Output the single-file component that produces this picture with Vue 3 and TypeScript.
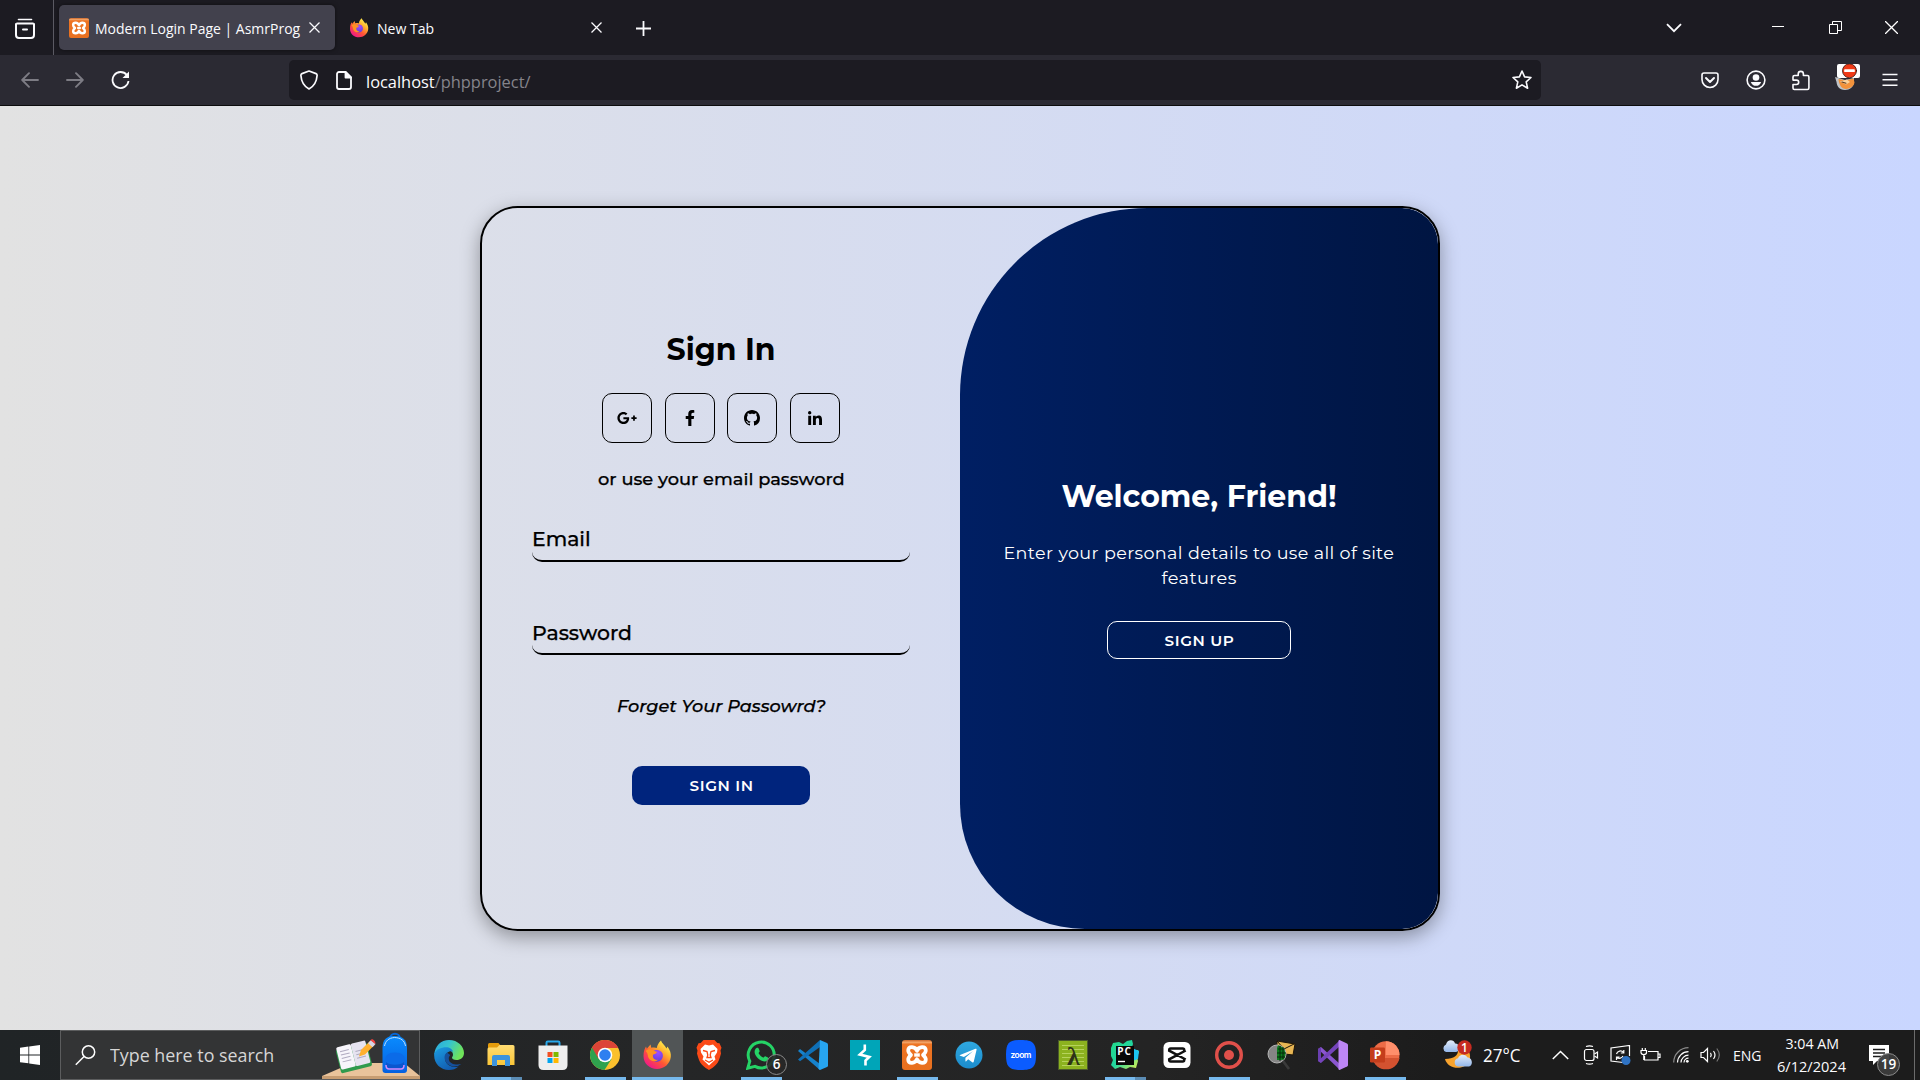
<script setup lang="ts">
import type { Directive } from 'vue'

// Stretches a label horizontally so that it fills the given width in pixels.
const vFit: Directive<HTMLElement, number> = {
  mounted(el, { value }) {
    el.style.transform = `scaleX(${value / el.offsetWidth})`
  },
}

interface TaskApp {
  name: string
  state?: 'open' | 'stacked' | 'active'
}

const apps: TaskApp[] = [
  { name: 'edge' },
  { name: 'explorer', state: 'stacked' },
  { name: 'store' },
  { name: 'chrome', state: 'open' },
  { name: 'firefox', state: 'active' },
  { name: 'brave' },
  { name: 'whatsapp', state: 'open' },
  { name: 'vscode' },
  { name: 'burp' },
  { name: 'xampp', state: 'open' },
  { name: 'telegram' },
  { name: 'zoom' },
  { name: 'lambda' },
  { name: 'pycharm', state: 'stacked' },
  { name: 'capcut' },
  { name: 'record', state: 'open' },
  { name: 'mailsearch' },
  { name: 'visualstudio' },
  { name: 'powerpoint', state: 'open' },
]

const socials = [
  { name: 'google', box: '0 0 640 512', width: 20, d: 'M386.061 228.496c1.834 9.692 3.143 19.384 3.143 31.956C389.204 370.205 315.599 448 204.8 448c-106.084 0-192-85.915-192-192s85.916-192 192-192c51.864 0 95.083 18.859 128.611 50.292l-52.126 50.03c-14.145-13.621-39.028-29.599-76.485-29.599-65.484 0-118.92 54.221-118.92 121.277 0 67.056 53.436 121.277 118.92 121.277 75.961 0 104.513-54.745 108.965-82.773H204.8v-66.009h181.261zm185.406 6.437V179.2h-56.001v55.733h-55.733v56.001h55.733v55.733h56.001v-55.733H627.2v-56.001h-55.733z' },
  { name: 'facebook', box: '0 0 320 512', width: 10, d: 'M279.14 288l14.22-92.66h-88.91v-60.13c0-25.35 12.42-50.06 52.24-50.06h40.42V6.26S260.43 0 225.36 0c-73.22 0-121.08 44.38-121.08 124.72v70.62H22.89V288h81.39v224h100.17V288z' },
  { name: 'github', box: '0 0 16 16', width: 16, d: 'M8 0C3.58 0 0 3.58 0 8c0 3.54 2.29 6.53 5.47 7.59.4.07.55-.17.55-.38 0-.19-.01-.82-.01-1.49-2.01.37-2.53-.49-2.69-.94-.09-.23-.48-.94-.82-1.13-.28-.15-.68-.52-.01-.53.63-.01 1.08.58 1.23.82.72 1.21 1.87.87 2.33.66.07-.52.28-.87.51-1.07-1.78-.2-3.64-.89-3.64-3.95 0-.87.31-1.59.82-2.15-.08-.2-.36-1.02.08-2.12 0 0 .67-.21 2.2.82.64-.18 1.32-.27 2-.27s1.36.09 2 .27c1.53-1.04 2.2-.82 2.2-.82.44 1.1.16 1.92.08 2.12.51.56.82 1.27.82 2.15 0 3.07-1.87 3.75-3.65 3.95.29.25.54.73.54 1.48 0 1.07-.01 1.93-.01 2.2 0 .21.15.46.55.38A8.01 8.01 0 0 0 16 8c0-4.42-3.58-8-8-8z' },
  { name: 'linkedin', box: '0 -32 448 512', width: 14, d: 'M100.28 448H7.4V148.9h92.88zM53.79 108.1C24.09 108.1 0 83.5 0 53.8a53.79 53.79 0 0 1 107.58 0c0 29.7-24.1 54.3-53.79 54.3zM447.9 448h-92.68V302.4c0-34.7-.7-79.2-48.29-79.2-48.29 0-55.69 37.7-55.69 76.7V448h-92.78V148.9h89.08v40.8h1.3c12.4-23.5 42.69-48.3 87.88-48.3 94 0 111.28 61.9 111.28 142.3V448z' },
]
</script>

<template>
  <div class="desktop">
    <!-- Shared gradients and logos -->
    <svg class="defs" width="0" height="0">
      <defs>
        <linearGradient id="ff-body" x1="0.85" y1="0.1" x2="0.2" y2="0.95">
          <stop offset="0" stop-color="#fff44f" /><stop offset=".3" stop-color="#ffb02e" />
          <stop offset=".6" stop-color="#ff5634" /><stop offset="1" stop-color="#f0168c" />
        </linearGradient>
        <radialGradient id="ff-globe" cx=".6" cy=".25" r=".8">
          <stop offset="0" stop-color="#a24bff" /><stop offset="1" stop-color="#5b3fd8" />
        </radialGradient>
        <linearGradient id="xa" x1="0" y1="0" x2="0" y2="1">
          <stop offset="0" stop-color="#c9662a" /><stop offset=".08" stop-color="#f3a467" /><stop offset=".14" stop-color="#ee7423" /><stop offset="1" stop-color="#e8701f" />
        </linearGradient>
        <linearGradient id="edge-top" x1="0" y1="0" x2="1" y2=".4">
          <stop offset="0" stop-color="#2aa6e0" /><stop offset=".5" stop-color="#35c4cf" /><stop offset="1" stop-color="#6fe35a" />
        </linearGradient>
        <linearGradient id="edge-low" x1="0" y1="0" x2=".6" y2="1">
          <stop offset="0" stop-color="#1b9de2" /><stop offset="1" stop-color="#125cb0" />
        </linearGradient>
        <linearGradient id="folder" x1="0" y1="0" x2="0" y2="1">
          <stop offset="0" stop-color="#ffdc72" /><stop offset="1" stop-color="#fbc638" />
        </linearGradient>
        <linearGradient id="tg" x1="0" y1="0" x2="0" y2="1">
          <stop offset="0" stop-color="#2fa8e0" /><stop offset="1" stop-color="#1b8ccc" />
        </linearGradient>
        <linearGradient id="pc" x1="0" y1="0" x2="1" y2="1">
          <stop offset="0" stop-color="#21d789" /><stop offset=".5" stop-color="#22d6a0" /><stop offset="1" stop-color="#e6f24d" />
        </linearGradient>
        <linearGradient id="bag" x1="0" y1="0" x2="0" y2="1">
          <stop offset="0" stop-color="#0a8cff" /><stop offset="1" stop-color="#0560e0" />
        </linearGradient>
        <linearGradient id="cloud" x1="0" y1="0" x2="0" y2="1">
          <stop offset="0" stop-color="#e4edfb" /><stop offset="1" stop-color="#93b7ea" />
        </linearGradient>
        <symbol id="firefox" viewBox="0 0 30 30">
          <path d="M19 0.500c.6 2.500 4 5 5.500 8l1-2C28 10 29.300 13.500 28.800 17 28 24 22 29 15 29 7.500 29 1.500 23.500 1.500 16c0-4.500 1.200-7.500 2.500-9.500l.8 2.300L8.500 4.600l.8 3.200c2-.5 4.200-.5 5.500.3C15 5 17 2.500 19 .5z" fill="url(#ff-body)" />
          <path d="M10.500 11.500c3-2.700 8.500-2 10 2 1.500 4.200-1.500 8.200-5.500 8.200-3.600 0-6.300-2.700-6.300-6 0-.9.2-1.700.5-2.400 1.500.6 3.300.5 4.600-.5-.8-.5-2.200-1-3.300-1.300z" fill="url(#ff-globe)" />
          <path d="M3.500 11c2-1.800 4-2 6-1.500 1.800.6 3.200 2 5.500 2.300-.5 2-2.600 2.500-4 3-.8 3.500 2 5.600 5 5-2.700 2.700-8 1.700-9.500-2C5.500 15 6 13 3.500 11z" fill="#ff9322" />
        </symbol>
        <symbol id="xampp" viewBox="0 0 30 30">
          <rect width="30" height="30" rx="3" fill="url(#xa)" />
          <path d="M15 10.800C13.200 6 6.500 6 6.200 10.200 6 12.500 7.800 14 9 15c-1.200 1-3 2.500-2.800 4.800.3 4.200 7 4.200 8.800-.6 1.800 4.800 8.500 4.800 8.800.6.200-2.300-1.600-3.800-2.800-4.800 1.200-1 3-2.500 2.800-4.800C23.500 6 16.800 6 15 10.800z" fill="none" stroke="#fff" stroke-width="3.700" stroke-linejoin="round" />
          <path d="M12.200 15h5.600" stroke="#fff" stroke-width="3.400" />
        </symbol>
      </defs>
    </svg>

    <header class="tabs">
      <div class="view-btn">
        <svg width="20" height="22" viewBox="0 0 20 22" fill="none" stroke="#fbfbfe" stroke-width="2" stroke-linecap="round"><path d="M3.500 1.500h13" stroke-width="1.600" /><path d="M2 5.500h16" /><path d="M1 6v11a3 3 0 0 0 3 3h12a3 3 0 0 0 3-3V6" /><path d="M8 11.500h4" /></svg>
      </div>
      <div class="tab selected">
        <svg width="20" height="20"><use href="#xampp" /></svg>
        <span class="tab-text"><span v-fit="205" class="fit">Modern Login Page | AsmrProg</span></span>
        <svg class="x" width="11" height="11" viewBox="0 0 11 11"><path d="M.5.5l10 10M10.500.5l-10 10" /></svg>
      </div>
      <div class="tab">
        <svg width="20" height="20"><use href="#firefox" /></svg>
        <span class="tab-text"><span v-fit="57" class="fit">New Tab</span></span>
        <svg class="x" width="11" height="11" viewBox="0 0 11 11"><path d="M.5.5l10 10M10.500.5l-10 10" /></svg>
      </div>
      <svg class="plus" width="15" height="15" viewBox="0 0 15 15"><path d="M7.500 0v15M0 7.500h15" /></svg>
      <div class="window-btns">
        <svg class="chev" width="16" height="10" viewBox="0 0 16 10"><path d="M1 1.200l7 7 7-7" /></svg>
        <svg class="min" width="12" height="12" viewBox="0 0 12 12"><path d="M0 5.500h12" /></svg>
        <svg class="restore" width="13" height="13" viewBox="0 0 13 13"><path d="M.5 3.500h8v9h-8zM3.500 3.500v-3h9v9h-4" /></svg>
        <svg class="close" width="13" height="13" viewBox="0 0 13 13"><path d="M0 0l13 13M13 0L0 13" /></svg>
      </div>
    </header>

    <nav class="toolbar">
      <svg class="dim back" width="18" height="16" viewBox="0 0 18 16"><path d="M17 8H1.500M8 1.200L1.200 8 8 14.800" /></svg>
      <svg class="dim fwd" width="18" height="16" viewBox="0 0 18 16"><path d="M1 8h15.500M10 1.200L16.800 8 10 14.800" /></svg>
      <svg class="reload" width="19" height="20" viewBox="0 0 19 20"><path d="M15.800 5A8 8 0 1 0 17.500 11" fill="none" stroke="#fbfbfe" stroke-width="1.800" /><path d="M18 1.500v6.500h-6.500z" fill="#fbfbfe" /></svg>
      <div class="urlbar">
        <svg width="18" height="20" viewBox="0 0 18 20" fill="none" stroke="#fbfbfe" stroke-width="1.700" stroke-linejoin="round"><path d="M9 1l7 2.600c1 .4 1.200.8 1.100 1.900C16.700 11 14.500 16 9 19 3.500 16 1.300 11 .9 5.500.8 4.400 1 4 2 3.600z" /></svg>
        <svg class="page" width="16" height="19" viewBox="0 0 16 19" fill="none" stroke="#fbfbfe" stroke-width="1.800" stroke-linejoin="round"><path d="M9.500 1H3a2 2 0 0 0-2 2v13a2 2 0 0 0 2 2h10a2 2 0 0 0 2-2V6.500z" /><path d="M9.500 1v5.500H15z" fill="#fbfbfe" /></svg>
        <span class="url"><span v-fit="165" class="fit">localhost<i>/phpproject/</i></span></span>
        <svg class="star" width="20" height="20" viewBox="0 0 20 20"><path d="M10 1l2.600 5.900 6.400.6-4.800 4.300 1.400 6.400L10 14.900l-5.600 3.300 1.400-6.400L1 7.500l6.400-.6z" /></svg>
      </div>
      <div class="actions">
        <svg width="18" height="17" viewBox="0 0 18 17"><path d="M3 1h12a2 2 0 0 1 2 2v4.500a8 8 0 0 1-16 0V3a2 2 0 0 1 2-2z" /><path d="M5 6l4 4 4-4" stroke-width="2" /></svg>
        <svg width="20" height="20" viewBox="0 0 20 20"><circle cx="10" cy="10" r="8.900" /><circle cx="10" cy="7.500" r="3.300" fill="#fbfbfe" stroke="none" /><path d="M4.800 12h10.400c-1 3-3 3.800-5.200 3.800S5.800 15 4.800 12z" fill="#fbfbfe" stroke="none" /></svg>
        <svg class="puzzle" width="18" height="21" viewBox="0 0 18 21"><path d="M2.500 5.500h3.700V4a2.600 2.600 0 0 1 5.200 0v1.500h4a1.500 1.500 0 0 1 1.500 1.500v11a1.500 1.500 0 0 1-1.500 1.500h-13A1.500 1.500 0 0 1 1 18v-3.500h3.500a2.200 2.200 0 0 0 0-4.400H1V7a1.500 1.500 0 0 1 1.500-1.500z" /></svg>
        <svg class="fox" width="26" height="26" viewBox="0 0 26 26" stroke="none"><path d="M0 13l10 3 9-2v5c-1 4-4 7-9 7-6 0-8-4-8.500-8z" fill="#bfc3c7" /><path d="M3.500 15l6.500 1.500 8.500-2 1 4c-1 4-4 6-8.500 6.500-4.500 0-7-4-7.500-10z" fill="#f2923c" /><path d="M5 17.500l7-2 3 2.500-4 2.500zM14 23l4-4" fill="#fbd29c" /><path d="M7 18l4 1.200" stroke="#5b3a20" stroke-width="1.200" /><rect x="2" y="0" width="23" height="14" rx="2" fill="#fff" /><circle cx="14.500" cy="6.800" r="7" fill="#f03a17" stroke="#30100a" stroke-width=".8" /><rect x="9.200" y="5.300" width="10.600" height="2.800" rx=".6" fill="#fff" /></svg>
        <svg class="menu" width="16" height="14" viewBox="0 0 16 14"><path d="M.5 1.500h15M.5 6.800h15M.5 12.200h15" stroke-linecap="butt" /></svg>
      </div>
    </nav>

    <main class="page-view">
      <section class="card">
        <form class="signin" @submit.prevent>
          <h1><span v-fit="109" class="fit mid">Sign In</span></h1>
          <div class="socials">
            <a v-for="s in socials" :key="s.name" class="social">
              <svg :viewBox="s.box" :width="s.width" height="16"><path :d="s.d" /></svg>
            </a>
          </div>
          <p class="hint"><span v-fit="247" class="fit mid">or use your email password</span></p>
          <label class="field"><span v-fit="59" class="fit">Email</span></label>
          <label class="field second"><span v-fit="100" class="fit">Password</span></label>
          <a class="forget"><span v-fit="209" class="fit mid">Forget Your Passowrd?</span></a>
          <button class="btn solid"><span v-fit="64" class="fit mid">SIGN IN</span></button>
        </form>
        <div class="welcome">
          <h1><span v-fit="275" class="fit mid">Welcome, Friend!</span></h1>
          <p><span v-fit="391" class="fit mid">Enter your personal details to use all of site</span></p>
          <p><span v-fit="75" class="fit mid">features</span></p>
          <button class="btn outline"><span v-fit="70" class="fit mid">SIGN UP</span></button>
        </div>
      </section>
    </main>

    <footer class="taskbar">
      <div class="start">
        <svg width="20" height="20" viewBox="0 0 20 20" fill="#fff"><path d="M0 2.800l8.400-1.200v7.900H0zM9.200 1.500L20 0v9.500H9.200zM0 10.400h8.400v7.900L0 17.200zM9.200 10.400H20V20L9.200 18.500z" /></svg>
      </div>
      <div class="search">
        <svg width="21" height="21" viewBox="0 0 21 21" fill="none" stroke="#fff" stroke-width="1.500"><circle cx="13.500" cy="7" r="6.200" /><path d="M9 11.500L.8 19.800" /></svg>
        <span class="search-text"><span v-fit="164" class="fit">Type here to search</span></span>
        <svg class="doodle" width="98" height="48" viewBox="0 0 98 48">
          <path d="M30 32h52l16 13H0z" fill="#e9c39b" /><path d="M0 45h98v3H0z" fill="#c79d72" />
          <g transform="rotate(-14 32 27)"><rect x="16" y="15" width="32" height="24" rx="2" fill="#2f9a4d" /><rect x="17" y="12.500" width="15" height="23" rx="1.500" fill="#f7f5fb" /><rect x="32" y="12.500" width="15" height="23" rx="1.500" fill="#e6e3f0" /><path d="M20 17.500h9M20 21h9M20 24.500h9M20 28h9M35 21h8M35 24.500h9M35 28h9" stroke="#b0abc0" stroke-width="1" /></g>
          <path d="M37 25.500l2-6.500L48 10l4.500 4L43 23.500z" fill="#ffb02e" /><path d="M46 12.200L49 9l4.500 4-3 3.200z" fill="#d8d5e4" /><path d="M48.500 9.200c1.500-2.500 5.500.8 4.800 3.800z" fill="#f8403c" />
          <path d="M68 8c0-7 10-7 10 0" fill="none" stroke="#0667d8" stroke-width="2" /><path d="M60.500 39V17C60.500 8 65 5 72.500 5S85 8 85 17v22q0 3-3 3H63.500q-3 0-3-3z" fill="url(#bag)" /><path d="M63 29.500c0-5 3-8 10-8s10 3 10 8v8q0 2-2 2H65q-2 0-2-2z" fill="#0b6be8" /><path d="M64 31c3 3.500 15 3.500 18 0v5q0 3-3 3H67q-3 0-3-3z" fill="#0a55cf" /><path d="M64 34q0 4 3 4h12q3 0 3-4" fill="none" stroke="#d48cff" stroke-width="1.500" /><path d="M62.500 15c1-5 4-8 10-8.500 6.500.3 10 3 11 8.500" fill="none" stroke="#bfe1ff" stroke-width="1" />
        </svg>
      </div>

      <div v-for="app in apps" :key="app.name" class="app" :class="app.state">
        <svg width="30" height="30" viewBox="0 0 30 30">
          <g v-if="app.name === 'edge'">
            <path d="M.3 14.500C.8 6 7 0 15 0c9 0 15 6.500 15 13 0 4.500-3.500 7-7.500 7-3 0-4.500-1-4.500-2.200 0-.8 1-1.300 1-3C19 11.500 16 9.500 12 9.500c-5 0-9 1.500-11.700 5z" fill="url(#edge-top)" />
            <path d="M.2 14C2 9.500 7 7.300 12 7.300c3.500 0 6.500 2 7 4.500-2.500-1.600-8 .2-8 6.200 0 6.500 6.500 10.500 13.500 8.500C22 29 18.500 30 15 30 6.500 30-.5 23.500.2 14z" fill="url(#edge-low)" />
            <path d="M13 12.500C10.500 14 10 17 11 20c1.300 4.200 5.500 6.500 9.500 6.500 2.500 0 4.500-.8 6.800-2.500-3.500 1-12 1-12.500-5-.1-1.600.5-2.800 1.400-4z" fill="#15509c" />
          </g>
          <g v-else-if="app.name === 'explorer'">
            <path d="M2 4.500Q2 3 3.500 3h9L15 6v4H2z" fill="#e59c0c" /><path d="M1.500 9q0-1.500 1.500-1.500h8L13.500 5H27q1.500 0 1.500 1.500v18.500H1.500z" fill="url(#folder)" />
            <path d="M6 26v-9q0-2 2-2h14q2 0 2 2v9h-5v-6h-8v6z" fill="#3c93dd" />
          </g>
          <g v-else-if="app.name === 'store'">
            <path d="M8.500 6.500V2.800q0-1.300 1.300-1.300h10.400q1.300 0 1.300 1.300v3.700" fill="none" stroke="#28a8ea" stroke-width="2" /><path d="M.5 5.500h29V25q0 5-5 5h-19q-5 0-5-5z" fill="#eee" />
            <path d="M9.500 12h5v5h-5z" fill="#f25022" /><path d="M15.500 12h5v5h-5z" fill="#7fba00" /><path d="M9.500 18h5v5h-5z" fill="#00a4ef" /><path d="M15.500 18h5v5h-5z" fill="#ffb900" />
          </g>
          <g v-else-if="app.name === 'chrome'">
            <circle cx="15" cy="15" r="15" fill="#fbc02d" /><path d="M15 15L2 7.500A15 15 0 0 0 14.500 30l7-11z" fill="#2fa24e" /><path d="M2 7.500A15 15 0 0 1 28.300 8H15v7l-6.500 3.700z" fill="#dc4437" /><circle cx="15" cy="15" r="7.300" fill="#fff" /><circle cx="15" cy="15" r="5.800" fill="#2d7ff0" />
          </g>
          <use v-else-if="app.name === 'firefox'" href="#firefox" />
          <g v-else-if="app.name === 'brave'">
            <path d="M9.500 0h11l2.800 3 2.200.3 2 4.500-1 2.700.5 3c-1.500 5.500-2.500 9-5 11.200C19.500 27 17 29 15 30c-2-1-4.500-3-7-5.300C5.500 22.500 4.500 19 3 13.500l.5-3-1-2.700 2-4.500L6.700 3z" fill="#fb4a17" />
            <path d="M15 5.500l4-1 4.500 4.500-.5 3.500-2.500 4 1 3-3.300 3L15 25.500l-3.200-3-3.300-3 1-3-2.500-4L6.500 9 11 4.500z" fill="#fff" /><path d="M9 10.500l4 1 .8 3.500-.8 2.500h4l-.8-2.500.8-3.500 4-1M11 20l4 2.200 4-2.200" fill="none" stroke="#fb4a17" stroke-width="1.300" />
          </g>
          <g v-else-if="app.name === 'whatsapp'">
            <path d="M1.800 28.200l2-7A13 13 0 1 1 9 26.400z" fill="none" stroke="#25d366" stroke-width="3" /><path d="M10.500 8c1-.7 2-.2 2.300.8l.8 2.200c.3.900-1.300 1.700-1 2.300 1 2 2.500 3.300 4.500 4.200.7.200 1.400-1.700 2.300-1.300l2.500 1.200c1 .6-.2 4-3.300 4-4.500 0-10-5.500-10-9.500 0-2 1-3.300 1.900-3.900z" fill="#25d366" />
          </g>
          <g v-else-if="app.name === 'vscode'">
            <path d="M0 11l2-2 20 15v6z" fill="#1682cc" /><path d="M0 19.500l2 1.800L22 7V0z" fill="#0f70b7" /><path d="M22 0l7 3q1 .5 1 1.500v21q0 1-1 1.500l-7 3-1.500-1z" fill="#27a5f0" />
          </g>
          <g v-else-if="app.name === 'burp'">
            <rect width="30" height="30" fill="#00a5b8" /><path d="M14.800 4.500V10l-5 4.500 9.500 2.500-3.800 3.500V25.500" fill="none" stroke="#fff" stroke-width="2.600" />
          </g>
          <use v-else-if="app.name === 'xampp'" href="#xampp" />
          <g v-else-if="app.name === 'telegram'">
            <circle cx="15" cy="15" r="13.500" fill="url(#tg)" /><path d="M6 15l15.500-6.300c.8-.2 1.300.2 1 1.400l-2.700 11.500c-.2 1-.8 1.200-1.600.7l-4-3-2 2c-.5.400-.8.2-.8-.5v-3l7.500-6.500-9 5.600-3.700-1.200c-.8-.2-.7-.5-.2-.7z" fill="#fff" />
          </g>
          <g v-else-if="app.name === 'zoom'">
            <path d="M15 0c12 0 15 3 15 15s-3 15-15 15S0 27 0 15 3 0 15 0z" fill="#0b5cff" /><text x="15" y="17.500" text-anchor="middle" textLength="21" class="ic zoom-text">zoom</text>
          </g>
          <g v-else-if="app.name === 'lambda'">
            <rect x=".5" y=".5" width="29" height="29" fill="#8cb21f" stroke="#4a5a2a" /><path d="M4 5.500h22M4 9.500h22M4 13.500h22M4 17.500h22M4 21.500h22M4 25.500h22" stroke="#b6d35c" /><text x="15.500" y="24.500" text-anchor="middle" class="ic lambda-text">λ</text>
          </g>
          <g v-else-if="app.name === 'pycharm'">
            <path d="M1 8l2-5 6-1 4 2 4-3 5-1 1 4-2 6h7l1 2-2 5 1 4-2 7-6-1-4 2-6-2-5 2-4-4 2-5-2-4z" fill="url(#pc)" /><path d="M22 8l7 3-1 8-6 2z" fill="#1cc5f0" /><rect x="6" y="6" width="18" height="19" fill="#080808" /><path d="M8 21.500h7" stroke="#fff" stroke-width="1.400" /><text x="7.300" y="15.200" textLength="13.500" class="ic pc-text">PC</text>
          </g>
          <g v-else-if="app.name === 'capcut'">
            <rect x="1.500" y="2" width="27" height="26" rx="5.500" fill="#fff" /><path d="M23 11.500V10q0-1.500-1.500-1.500h-12Q8 8.500 8 10v.7L24.500 19.500M23 18.500V20q0 1.500-1.500 1.500h-12Q8 21.500 8 20v-.7L24.500 10.500" fill="none" stroke="#111" stroke-width="2.500" transform="translate(-.8 0)" />
          </g>
          <g v-else-if="app.name === 'record'">
            <circle cx="15" cy="15" r="12.300" fill="none" stroke="#e0504a" stroke-width="3.400" /><circle cx="15" cy="15" r="5" fill="#e0504a" />
          </g>
          <g v-else-if="app.name === 'mailsearch'">
            <path d="M11 1l18 3-2 11-16-2z" fill="#e8b654" stroke="#1c1408" /><path d="M11 1l7 8 10-5" fill="none" stroke="#1c1408" /><circle cx="11" cy="14" r="9" fill="#858585" stroke="#b5b5b5" /><path d="M12 5.300a9 9 0 0 1 5.500 14.500L11 20V8z" fill="#0c7a1c" /><path d="M12 9h7M11 13h9M11 17h8M14 6v15M17 7v12" stroke="#04280a" /><path d="M17 21l6 8" stroke="#3a3a3a" stroke-width="2.600" />
          </g>
          <g v-else-if="app.name === 'visualstudio'">
            <path d="M0 9l3-2L22 24v6z" fill="#8a55d0" /><path d="M0 9l3-2v16l-3-2z" fill="#6a3fb0" /><path d="M0 21l3 2L22 6V0z" fill="#7544bb" /><path d="M21.500 0L29 3.500q1 .5 1 1.500v20q0 1-1 1.500L21.500 30q-1 0-1-1V1q0-1 1-1z" fill="#bd86f5" />
          </g>
          <g v-else-if="app.name === 'powerpoint'">
            <circle cx="15.800" cy="15" r="13.700" fill="#ed6c47" /><path d="M15.800 1.300A13.700 13.700 0 0 1 29.500 15H15.800z" fill="#ff8f6b" /><path d="M2.500 18h27a13.700 13.700 0 0 1-27 0z" fill="#d35230" /><rect x="0" y="7.500" width="15" height="15" rx="1.300" fill="#c43e1c" /><text x="7.500" y="19.300" text-anchor="middle" class="ic p-text">P</text>
          </g>
        </svg>
        <span v-if="app.name === 'whatsapp'" class="count six">6</span>
      </div>

      <div class="tray">
        <svg class="weather" width="31" height="30" viewBox="0 0 31 30"><path d="M15 5c3 8 0 14-12 14 2 9 17 13 24 3 2-5 1-9-1-12z" fill="#f7a32e" /><path d="M4 12a4 4 0 0 1 0-7.500C5-1 12-1 13 3.500c5-1 6 8 1 8.500z" fill="url(#cloud)" /><path d="M16 26.500a4.200 4.200 0 0 1 0-8.200c1.500-5 8-4.500 9.500-.8 5 0 6 8 1.500 9z" fill="url(#cloud)" /><circle cx="22.500" cy="7.500" r="7.200" fill="#c62b20" /><text x="22.500" y="12" text-anchor="middle" class="ic one-text">1</text></svg>
        <span class="temp"><span v-fit="38" class="fit">27°C</span></span>
        <svg class="t-chev" width="17" height="10" viewBox="0 0 17 10"><path d="M.8 9L8.500 1.500 16.200 9" /></svg>
        <svg class="t-cam" width="16" height="20" viewBox="0 0 16 20"><rect x="1.500" y="4.500" width="9.500" height="11" rx="2" /><path d="M11.500 9l3-2v6l-3-2M3 1.500q3.500-1.300 7 0M3 18.500q3.500 1.300 7 0" /></svg>
        <svg class="t-sync" width="21" height="20" viewBox="0 0 21 20"><path d="M13 17.500L1 16V3l18.500-2.500V11" /><path d="M6.500 9a4 4 0 0 1 7-1.500M13.800 5v3h-3M13 11a4 4 0 0 1-6 1.500M6.500 15v-3h3" /><circle cx="16" cy="15.500" r="4.500" fill="#2f73c4" stroke="none" /></svg>
        <svg class="t-bat" width="21" height="14" viewBox="0 0 21 14"><path d="M8 3.500h10v8.500H4.500V8M18.500 6h1.500v3.500h-1.500" /><path d="M2.300 0v2.500M5.300 0v2.500M1 2.500h5.500v2q0 2-2.700 2T1 4.500zM3.800 6.500v5.500" /></svg>
        <svg class="t-wifi" width="16" height="16" viewBox="0 0 16 16"><g stroke="#8b8b8b"><path d="M.7 15.500A14.800 14.800 0 0 1 15.500.7" /></g><path d="M4.500 15.500A11 11 0 0 1 15.500 4.700M8 15.500A7.500 7.500 0 0 1 15.500 8.200M11 15.500a4.500 4.500 0 0 1 4.500-4.300" /><circle cx="14.300" cy="14.300" r="1.400" fill="#fff" stroke="none" /></svg>
        <svg class="t-vol" width="21" height="16" viewBox="0 0 21 16"><path d="M1 5.500h2.500L7.500 1.500v13L3.500 10.500H1z" /><path d="M10.500 5.800q1.500 2.200 0 4.400M13.500 4q3 4 0 8" /><path d="M16.800 1.500q5 6.500 0 13" stroke="#777" /></svg>
        <span class="lang"><span v-fit="29" class="fit">ENG</span></span>
        <div class="clock">
          <span><span v-fit="54" class="fit mid">3:04 AM</span></span>
          <span><span v-fit="69" class="fit mid">6/12/2024</span></span>
        </div>
        <div class="note">
          <svg width="20" height="20" viewBox="0 0 20 20"><path d="M0 0h20v16H8l-4 4v-4H0z" fill="#fff" /><path d="M4 4.500h12M4 8h12M4 11.500h8" stroke="#1c1c1c" stroke-width="1.300" /></svg>
          <span class="count nineteen">19</span>
        </div>
      </div>
      <div class="peek"></div>
    </footer>
  </div>
</template>

<style>
body { margin: 0; overflow: hidden; }
</style>

<style scoped>
* { box-sizing: border-box; }
.desktop { width: 1920px; height: 1080px; display: flex; flex-direction: column; overflow: hidden; font-family: "Open Sans", "Noto Sans", sans-serif; color: #fbfbfe; }
.defs { display: block; flex: none; }
svg { display: block; flex: none; }
.fit { display: inline-block; white-space: pre; transform-origin: left center; }
.fit.mid { transform-origin: center; }

.tabs { height: 55px; background: #1c1b22; display: flex; align-items: center; }
.view-btn { width: 54px; height: 55px; border-right: 1px solid #5b5a63; display: flex; align-items: center; padding: 2px 0 0 15px; }
.tab { width: 276px; height: 45px; margin-left: 5px; border-radius: 5px; display: flex; align-items: center; padding: 0 15px 0 10px; font-size: 15px; }
.tab.selected { background: #42414d; box-shadow: 0 0 4px rgba(0, 0, 0, .5); }
.tab + .tab { width: 276px; margin-left: 5px; padding-left: 9px; padding-right: 14px; }
.tab-text { flex: 1; width: 0; margin-left: 6px; line-height: 24px; padding-top: 1px; }
.tab + .tab .tab-text { margin-left: 8px; }
.x path, .plus path, .chev path { stroke: #fbfbfe; stroke-width: 1.300; fill: none; }
.plus { margin-left: 20px; margin-top: 1px; }
.plus path, .chev path { stroke-width: 1.800; }
.window-btns { margin-left: auto; display: flex; align-items: center; padding-right: 22px; }
.min, .restore, .close { fill: none; stroke: #fff; stroke-width: 1; }
.min { margin-left: 90px; margin-top: -1px; }
.restore { margin-left: 45px; }
.close { margin-left: 43px; stroke-width: 1.300; }

.toolbar { height: 51px; background: #2b2a33; border-bottom: 1px solid #0c0c0d; display: flex; align-items: center; }
.dim { fill: none; stroke: #7d7c84; stroke-width: 1.900; stroke-linecap: round; stroke-linejoin: round; }
.back { margin-left: 21px; }
.fwd { margin-left: 27px; }
.reload { margin-left: 27px; }
.urlbar { margin-left: 159px; width: 1252px; height: 40px; border-radius: 5px; background: #1c1b22; display: flex; align-items: center; padding: 0 9px 0 11px; }
.page { margin-left: 18px; }
.url { flex: 1; margin-left: 14px; font-size: 16.500px; line-height: 24px; padding-top: 4px; }
.url i { font-style: normal; color: #85848b; }
.star, .actions svg { fill: none; stroke: #fbfbfe; stroke-width: 1.600; stroke-linejoin: round; stroke-linecap: round; }
.actions { margin-left: 160px; display: flex; align-items: center; gap: 27px; }
.actions .puzzle { margin: 0 1px 0 -1px; }
.actions svg.fox { stroke: none; margin: -7px -3px 0 -3px; }
.actions .menu { margin-left: -3px; }

.page-view { height: 924px; background: linear-gradient(to right, #e2e2e2, #c9d6ff); padding: 100px 480px 0; font-family: Montserrat, Inter, sans-serif; }
.card { height: 725px; border: 2px solid #000; border-radius: 37.500px; box-shadow: 0 6px 19px rgba(0, 0, 0, .35); display: flex; overflow: hidden; color: #000; }
.signin { width: 478px; display: flex; flex-direction: column; align-items: center; padding: 121px 50px 0; }
h1 { margin: 0; font-size: 30px; line-height: 42px; font-weight: 700; text-align: center; }
.socials { display: flex; gap: 12.600px; margin-top: 22px; }
.social { width: 50px; height: 50px; border: 1px solid #000; border-radius: 10px; display: flex; align-items: center; justify-content: center; }
.hint { margin: 25px 0 0; font-size: 17.500px; font-weight: 500; line-height: 21px; white-space: nowrap; -webkit-text-stroke: .25px #000; }
.field { width: 378px; height: 33px; margin-top: 40px; border-bottom: 2px solid #000; border-radius: 10px; font-size: 20px; font-weight: 500; line-height: 20px; -webkit-text-stroke: .25px #000; }
.field.second { margin-top: 61px; height: 32px; }
.forget { margin-top: 40px; font-size: 17.500px; font-weight: 500; font-style: italic; line-height: 21px; -webkit-text-stroke: .25px #000; }
.btn { padding: 0 0 0 1px; border-radius: 10px; font: 600 15px/20px Montserrat, Inter, sans-serif; letter-spacing: .6px; color: #fff; }
.solid { width: 178px; height: 39px; border: 0; background: #00247d; margin-top: 50px; }
.welcome { width: 478px; display: flex; flex-direction: column; align-items: center; padding-top: 268px; color: #fff; background: linear-gradient(to right, #001f63, #001542); border-radius: 187.500px 36px 36px 125px; }
.welcome p { margin: 0; font-size: 17.500px; font-weight: 400; line-height: 25px; letter-spacing: .375px; }
.welcome h1 { margin-bottom: 22px; }
.outline { width: 184px; height: 38px; border: 1px solid #fff; background: transparent; margin-top: 31px; padding-top: 1px; }

.taskbar { height: 50px; background: linear-gradient(to right, #202426, #252627 35%, #242424 60%, #1c1c1c 75%); display: flex; }
.start { width: 60px; display: flex; align-items: center; justify-content: center; }
.search { width: 360px; margin-right: 4px; background: #333435; border: 1px solid #5c5d5e; display: flex; align-items: center; padding-left: 14px; }
.search-text { flex: 1; margin-left: 14px; font-size: 18.500px; line-height: 26px; color: #d6d6d6; white-space: nowrap; }
.doodle { margin-right: -1px; }
.app { width: 52px; display: flex; align-items: center; justify-content: center; position: relative; padding-right: 2px; }
.app.open::after, .app.stacked::after { content: ""; position: absolute; left: 5px; bottom: 0; width: 41px; height: 3px; background: #76b9ed; }
.app.stacked::after { background: linear-gradient(to right, #76b9ed 30px, #5b8cb4 30px); }
.app.active { background: #515556; border-right: 1px solid #252627; padding-right: 1px; }
.app.active::after { content: ""; position: absolute; left: 0; bottom: 0; width: 51px; height: 3px; background: #76b9ed; }
.count { position: absolute; width: 21px; height: 21px; border-radius: 50%; border: 1px solid #8a8a8a; background: rgba(40, 40, 40, .9); font-size: 13.500px; font-weight: 600; line-height: 19px; text-align: center; color: #fff; }
.six { left: 30px; top: 24px; }
.ic { fill: #fff; }
.zoom-text { font: 600 8.500px Inter, sans-serif; }
.lambda-text { font: 700 26px "Liberation Serif", serif; fill: #2d3218; }
.pc-text { font: 700 10px "Open Sans", sans-serif; }
.p-text { font: 700 12px "Open Sans", sans-serif; }
.one-text { font: 600 12px "Open Sans", sans-serif; }

.tray { flex: 1; display: flex; align-items: center; padding-left: 31px; }
.tray > svg { fill: none; stroke: #fff; stroke-width: 1.200; }
.tray .weather { stroke: none; margin-left: -1px; }
.temp { width: 60px; margin-left: 10px; font-size: 17.500px; line-height: 24px; }
.t-chev { margin-left: 9px; }
.tray .t-chev { stroke-width: 1.500; }
.t-cam { margin-left: 14px; }
.t-sync { margin-left: 11px; }
.t-bat { margin-left: 9px; }
.t-wifi { margin-left: 12px; }
.t-vol { margin-left: 11px; }
.lang { width: 30px; margin-left: 12px; font-size: 15px; line-height: 24px; white-space: nowrap; }
.clock { width: 100px; display: flex; flex-direction: column; align-items: center; font-size: 15px; line-height: 23px; margin-top: -1px; margin-left: -1px; }
.note { position: relative; margin-left: 7px; margin-top: -1px; }
.nineteen { left: 8px; top: 8px; width: 23px; height: 23px; line-height: 21px; background: rgba(60, 60, 60, .95); }
.peek { width: 6px; border-left: 1px solid #6b6b6b; }
</style>
